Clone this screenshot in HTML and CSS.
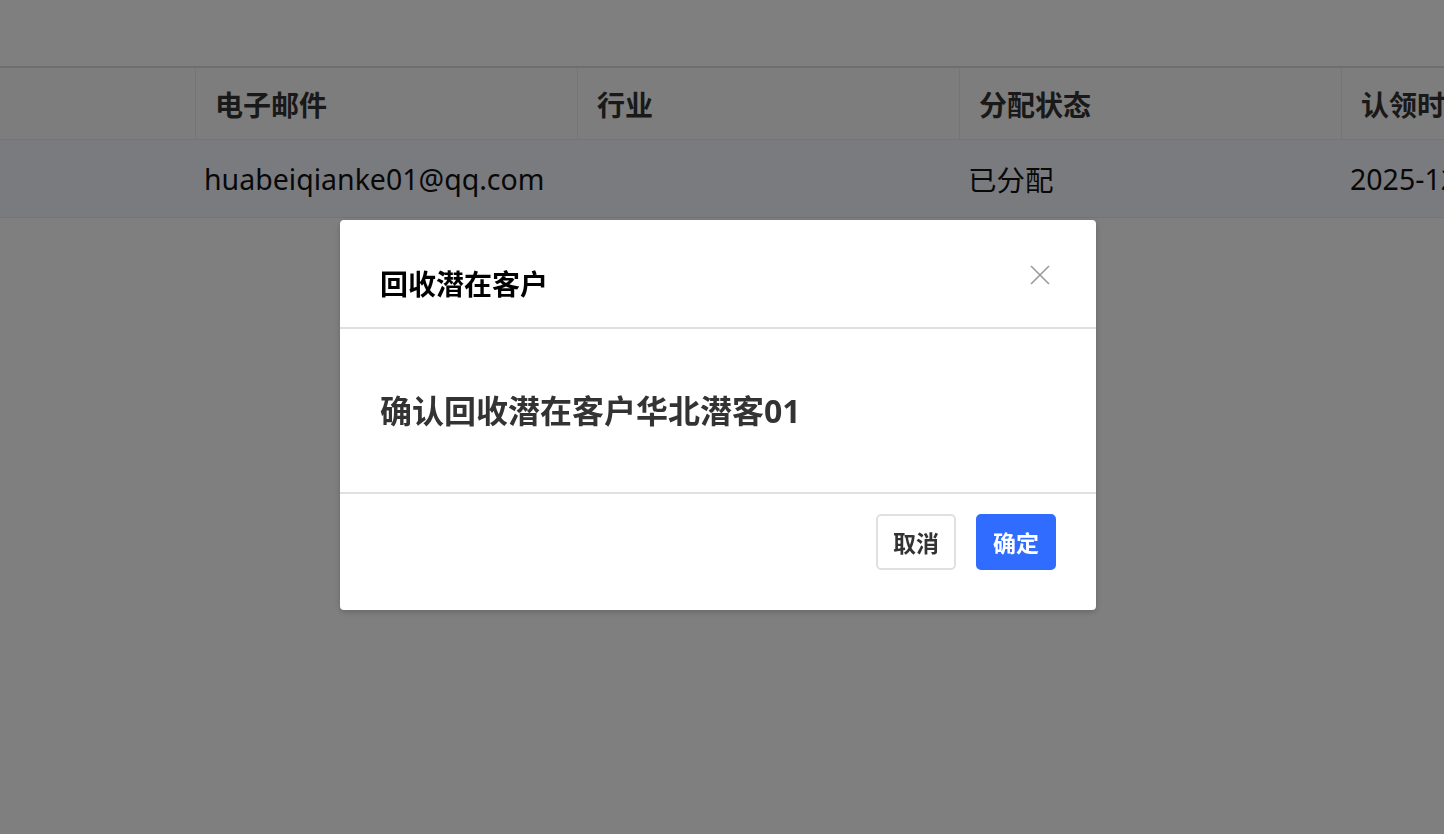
FILE: index.html
```html
<!DOCTYPE html>
<html lang="zh-CN">

<head>
    <meta charset="UTF-8">
    <meta name="viewport" content="width=device-width, initial-scale=1.0">
    <title>回收潜在客户</title>
    <link rel="stylesheet" href="styles.css">
</head>

<body>
    <div class="table-wrap">
        <div class="table">
            <div class="row row-head">
                <div class="cell"></div>
                <div class="cell">电子邮件</div>
                <div class="cell">行业</div>
                <div class="cell">分配状态</div>
                <div class="cell">认领时间</div>
            </div>
            <div class="row row-body">
                <div class="cell"></div>
                <div class="cell">huabeiqianke01@qq.com</div>
                <div class="cell"></div>
                <div class="cell">已分配</div>
                <div class="cell">2025-12-01 10:20:00</div>
            </div>
        </div>
    </div>

    <div class="modal">
        <div class="modal-backdrop"></div>
        <div class="modal-body">
            <div class="modal-header">
                <h2>回收潜在客户</h2>
                <button class="modal-close" aria-label="关闭">
                    <svg width="20" height="20" viewBox="0 0 20 20">
                        <path d="M1 1 L19 19 M19 1 L1 19" stroke="#999" stroke-width="1.6" fill="none" />
                    </svg>
                </button>
            </div>
            <div class="modal-content">
                <p>确认回收潜在客户华北潜客01</p>
            </div>
            <div class="modal-footer">
                <button class="btn">取消</button>
                <button class="btn btn-primary">确定</button>
            </div>
        </div>
    </div>
</body>

</html>
```

FILE: styles.css
```css
body {
    margin: 0;
    font-family: "Noto Sans", "Noto Sans CJK SC", sans-serif;
    background-color: #fff;
    overflow: hidden;
    height: 100vh;
}

.table-wrap {
    padding-top: 66px;
    overflow: hidden;
}

.table {
    width: 1700px;
    border-top: 2px solid #dcdcdc;
}

.row {
    display: grid;
    grid-template-columns: 195px 382px 382px 382px 359px;
}

.row-head {
    height: 71px;
    background-color: #fafafa;
    border-bottom: 1px solid #e8e8e8;
    font-weight: bold;
    font-size: 28px;
    color: #333;
}

.row-head .cell {
    padding-left: 19px;
    border-left: 1px solid #ebebeb;
}

.row-head .cell:first-child {
    border-left: 0;
}

.row-body {
    height: 77px;
    background-color: #f4f6ff;
    border-bottom: 1px solid #ebebeb;
    font-size: 28.5px;
    color: #111;
}

.row-body .cell {
    padding-left: 9px;
}

.cell {
    display: flex;
    align-items: center;
    white-space: nowrap;
    overflow: hidden;
}

.modal-backdrop {
    position: fixed;
    top: 0;
    right: 0;
    bottom: 0;
    left: 0;
    background-color: rgba(0, 0, 0, 0.5);
    z-index: 1;
}

.modal-body {
    position: fixed;
    top: 220px;
    left: 340px;
    width: 756px;
    background-color: #fff;
    border-radius: 4px;
    box-shadow: 0 2px 6px rgba(0, 0, 0, 0.2);
    z-index: 2;
}

.modal-header {
    display: flex;
    justify-content: space-between;
    align-items: center;
    height: 109px;
    padding: 0 40px;
    border-bottom: 2px solid #e0e0e0;
    box-sizing: border-box;
}

.modal-header h2 {
    margin: 19px 0 0;
    font-size: 28px;
    font-weight: bold;
    color: #000;
}

.modal-close {
    border: 0;
    padding: 0;
    background: none;
    margin-right: 6px;
    margin-top: 2px;
    cursor: pointer;
    line-height: 0;
}

.modal-content {
    height: 165px;
    padding: 0 40px;
    border-bottom: 2px solid #e0e0e0;
    box-sizing: border-box;
}

.modal-content p {
    margin: 0;
    padding-top: 57px;
    font-size: 32px;
    font-weight: bold;
    color: #333;
}

.modal-footer {
    display: flex;
    justify-content: flex-end;
    gap: 20px;
    padding: 20px 40px 40px;
}

.btn {
    width: 80px;
    height: 56px;
    padding: 0;
    border: 2px solid #e0e0e0;
    background-color: #fff;
    border-radius: 5px;
    font-family: "Noto Sans CJK SC", sans-serif;
    font-size: 23px;
    font-weight: bold;
    color: #333;
    cursor: pointer;
}

.btn-primary {
    border-color: #306cff;
    background-color: #306cff;
    color: #fff;
}
```
